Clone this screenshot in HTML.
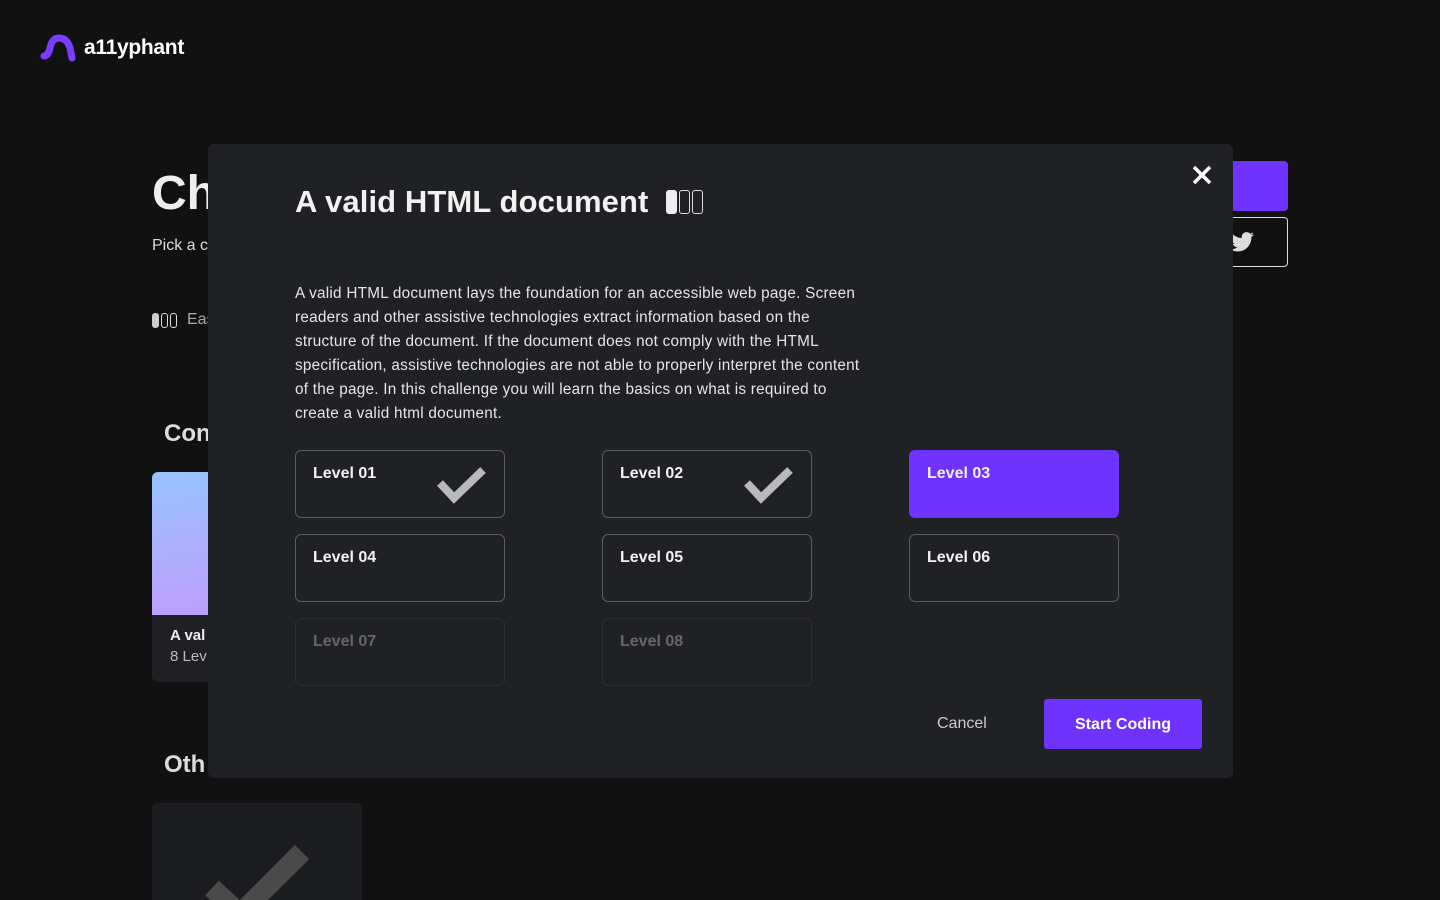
<!DOCTYPE html>
<html><head><meta charset="utf-8"><style>
*{box-sizing:border-box;margin:0;padding:0}
html,body{width:1440px;height:900px;overflow:hidden}
body{background:#111112;font-family:"Liberation Sans",sans-serif;color:#eee;position:relative}
.abs{position:absolute}
.logo{left:40px;top:34px;display:flex;align-items:center}
.logo span{font-size:21px;font-weight:bold;color:#fff;margin-left:6px;letter-spacing:-0.3px}
.modal{left:208px;top:144px;width:1025px;height:634px;background:#202125;border-radius:6px}
.card{position:absolute;width:210px;height:68px;border:1px solid #5a5b60;border-radius:6px;padding:14px 17px;font-weight:bold;font-size:16px;color:#f2f2f2}
.card.dis{border-color:#2e2f33;color:#66676b}
.card.act{background:#6e33ff;border-color:#6e33ff}
.card svg{position:absolute;left:139px;top:14px}
.bar{display:inline-block;border:1.5px solid #ddd;border-radius:3px}
</style></head><body>
<div class="abs logo"><svg width="38" height="28" viewBox="0 0 38 28"><path d="M4 22 Q8 22 10 14 Q12 4 19 4 Q27 4 30 14 L32 24" stroke="#7a3cff" stroke-width="7" fill="none" stroke-linecap="round"/></svg><span>a11yphant</span></div>
<div class="abs" style="left:152px;top:166px;font-size:48px;font-weight:bold;color:#eee">Ch</div>
<div class="abs" style="left:152px;top:237px;font-size:16px;color:#ddd">Pick a c</div>
<div class="abs" style="left:152px;top:311px;font-size:16px;color:#aaa;display:flex;align-items:center;gap:2px"><span class="bar" style="width:7px;height:15px;background:#ccc;border-color:#ccc"></span><span class="bar" style="width:7px;height:15px"></span><span class="bar" style="width:7px;height:15px"></span><span style="margin-left:8px">Eas</span></div>
<div class="abs" style="left:164px;top:420px;font-size:24px;font-weight:bold;color:#ddd">Con</div>
<div class="abs" style="left:152px;top:472px;width:100px;height:210px;background:#1f2024;border-radius:6px;overflow:hidden"><div style="height:143px;background:linear-gradient(170deg,#98c4ff,#c09cff)"></div><div style="padding:12px 18px;font-size:15px"><b>A val</b><br><span style="color:#bbb;line-height:26px">8 Lev</span></div></div>
<div class="abs" style="left:164px;top:751px;font-size:24px;font-weight:bold;color:#ddd">Oth</div>
<div class="abs" style="left:152px;top:803px;width:210px;height:97px;background:#1c1d20;border-radius:6px 6px 0 0;overflow:hidden"><svg class="abs" style="left:50px;top:35px" width="110" height="70"><path d="M10 50 L38 76 L100 14" stroke="#4a4a4a" stroke-width="20" fill="none"/></svg></div>
<div class="abs" style="left:1220px;top:161px;width:68px;height:50px;background:#6e33ff;border-radius:4px"></div>
<div class="abs" style="left:1220px;top:217px;width:68px;height:50px;border:1px solid #ddd;border-radius:4px"><svg class="abs" style="left:8px;top:14px" width="26" height="22" viewBox="0 0 24 20"><path d="M23 2c-.8.4-1.7.6-2.6.7.9-.6 1.6-1.4 2-2.5-.9.5-1.900.9-2.9 1.1C18.6.4 17.4 0 16.2 0c-2.5 0-4.5 2-4.5 4.5 0 .4 0 .7.1 1C8 5.3 4.7 3.5 2.5.8c-.4.7-.6 1.4-.6 2.3 0 1.6.8 2.9 2 3.7-.7 0-1.4-.2-2-.6v.1c0 2.2 1.6 4 3.6 4.4-.4.1-.8.2-1.2.2-.3 0-.6 0-.8-.1.6 1.8 2.2 3.1 4.2 3.1-1.5 1.2-3.5 1.9-5.6 1.9H1c2 1.3 4.4 2 6.9 2 8.3 0 12.8-6.9 12.8-12.8v-.6c.9-.6 1.6-1.4 2.3-2.3z" fill="#ddd"/></svg></div>
<div class="abs modal">
<svg class="abs" style="left:983px;top:20px" width="22" height="22"><path d="M3 3L19 19M19 3L3 19" stroke="#fff" stroke-width="3.5"/></svg>
<div class="abs" style="left:87px;top:40px;font-size:31px;font-weight:bold;color:#f2f2f2;display:flex;align-items:center;letter-spacing:0.1px">A valid HTML document<span style="margin-left:18px;display:flex;gap:2px"><span class="bar" style="width:11px;height:24px;background:#eee;border-color:#eee"></span><span class="bar" style="width:11px;height:24px"></span><span class="bar" style="width:11px;height:24px"></span></span></div>
<div class="abs" style="left:87px;top:138px;white-space:nowrap;font-size:15.3px;line-height:24px;color:#e6e6e6;letter-spacing:0.25px">A valid HTML document lays the foundation for an accessible web page. Screen<br>readers and other assistive technologies extract information based on the<br>structure of the document. If the document does not comply with the HTML<br>specification, assistive technologies are not able to properly interpret the content<br>of the page. In this challenge you will learn the basics on what is required to<br>create a valid html document.</div>
<div class="card" style="left:87px;top:306px">Level 01<svg width="52" height="40"><path d="M5 18L19 33L48 5" stroke="#b8b9ba" stroke-width="8" fill="none"/></svg></div>
<div class="card" style="left:394px;top:306px">Level 02<svg width="52" height="40"><path d="M5 18L19 33L48 5" stroke="#b8b9ba" stroke-width="8" fill="none"/></svg></div>
<div class="card act" style="left:701px;top:306px">Level 03</div>
<div class="card" style="left:87px;top:390px">Level 04</div>
<div class="card" style="left:394px;top:390px">Level 05</div>
<div class="card" style="left:701px;top:390px">Level 06</div>
<div class="card dis" style="left:87px;top:474px">Level 07</div>
<div class="card dis" style="left:394px;top:474px">Level 08</div>
<div class="abs" style="left:729px;top:571px;font-size:16px;color:#ccc">Cancel</div>
<div class="abs" style="left:836px;top:555px;width:158px;height:50px;background:#6e33ff;border-radius:3px;font-size:16px;font-weight:bold;color:#fff;display:flex;align-items:center;justify-content:center;padding-top:2px">Start Coding</div>
</div>
</body></html>
